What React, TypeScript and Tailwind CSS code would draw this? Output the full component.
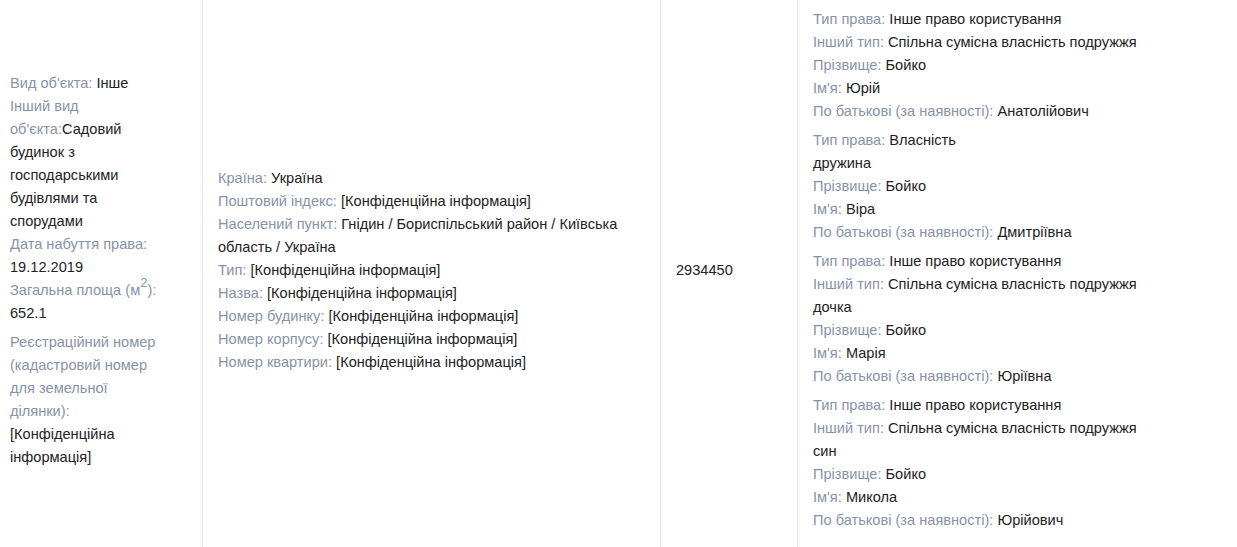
const font = { fontFamily: '"Liberation Sans", Arial, sans-serif' };

type Row = { label?: string; value?: string };

const owners: Row[][] = [
  [
    { label: 'Тип права:', value: 'Інше право користування' },
    { label: 'Інший тип:', value: 'Спільна сумісна власність подружжя' },
    { label: 'Прізвище:', value: 'Бойко' },
    { label: "Ім'я:", value: 'Юрій' },
    { label: 'По батькові (за наявності):', value: 'Анатолійович' },
  ],
  [
    { label: 'Тип права:', value: 'Власність' },
    { value: 'дружина' },
    { label: 'Прізвище:', value: 'Бойко' },
    { label: "Ім'я:", value: 'Віра' },
    { label: 'По батькові (за наявності):', value: 'Дмитріївна' },
  ],
  [
    { label: 'Тип права:', value: 'Інше право користування' },
    { label: 'Інший тип:', value: 'Спільна сумісна власність подружжя' },
    { value: 'дочка' },
    { label: 'Прізвище:', value: 'Бойко' },
    { label: "Ім'я:", value: 'Марія' },
    { label: 'По батькові (за наявності):', value: 'Юріївна' },
  ],
  [
    { label: 'Тип права:', value: 'Інше право користування' },
    { label: 'Інший тип:', value: 'Спільна сумісна власність подружжя' },
    { value: 'син' },
    { label: 'Прізвище:', value: 'Бойко' },
    { label: "Ім'я:", value: 'Микола' },
    { label: 'По батькові (за наявності):', value: 'Юрійович' },
  ],
];

const address: Row[] = [
  { label: 'Країна:', value: 'Україна' },
  { label: 'Поштовий індекс:', value: '[Конфіденційна інформація]' },
  { label: 'Населений пункт:', value: 'Гнідин / Бориспільський район / Київська' },
  { value: 'область / Україна' },
  { label: 'Тип:', value: '[Конфіденційна інформація]' },
  { label: 'Назва:', value: '[Конфіденційна інформація]' },
  { label: 'Номер будинку:', value: '[Конфіденційна інформація]' },
  { label: 'Номер корпусу:', value: '[Конфіденційна інформація]' },
  { label: 'Номер квартири:', value: '[Конфіденційна інформація]' },
];

const label = 'text-[#8693a8]';
const val = 'text-[#222]';

function Line({ label: l, value }: Row) {
  return (
    <div className="whitespace-nowrap">
      {l && <span className={label}>{l} </span>}
      {value && <span className={val}>{value}</span>}
    </div>
  );
}

export default function App() {
  return (
    <div style={font} className="h-[547px] w-[1237px] overflow-hidden bg-white text-[14.6px] leading-[23px]">
      <div className="grid h-full grid-cols-[203px_458px_137px_1fr]">
        <div className="flex items-center border-r border-[#e3e5e9] pb-[15px] pl-[10px] pt-[8px]">
          <div className="whitespace-nowrap">
            <div>
              <span className={label}>Вид об'єкта: </span>
              <span className={val}>Інше</span>
            </div>
            <div className={label}>Інший вид</div>
            <div>
              <span className={label}>об'єкта:</span>
              <span className={val}>Садовий</span>
            </div>
            <div className={val}>будинок з</div>
            <div className={val}>господарськими</div>
            <div className={val}>будівлями та</div>
            <div className={val}>спорудами</div>
            <div className={label}>Дата набуття права:</div>
            <div className={val}>19.12.2019</div>
            <div className={label}>
              Загальна площа (м<sup className="top-[-0.55em] text-[13px] leading-none">2</sup>):
            </div>
            <div className={val}>652.1</div>
            <div className="mt-[6px]">
              <div className={label}>Реєстраційний номер</div>
              <div className={label}>(кадастровий номер</div>
              <div className={label}>для земельної</div>
              <div className={label}>ділянки):</div>
              <div className={val}>[Конфіденційна</div>
              <div className={val}>інформація]</div>
            </div>
          </div>
        </div>

        <div className="flex items-center border-r border-[#e3e5e9] px-[15px] pb-[15px] pt-[8px]">
          <div>
            {address.map((r, i) => (
              <Line key={i} {...r} />
            ))}
          </div>
        </div>

        <div className={`flex items-center border-r border-[#e3e5e9] px-[15px] pb-[15px] pt-[8px] ${val}`}>
          2934450
        </div>

        <div className="flex items-center px-[15px] pb-[15px] pt-[8px]">
          <div className="flex flex-col gap-[6px]">
            {owners.map((block, i) => (
              <div key={i}>
                {block.map((r, j) => (
                  <Line key={j} {...r} />
                ))}
              </div>
            ))}
          </div>
        </div>
      </div>
    </div>
  );
}
